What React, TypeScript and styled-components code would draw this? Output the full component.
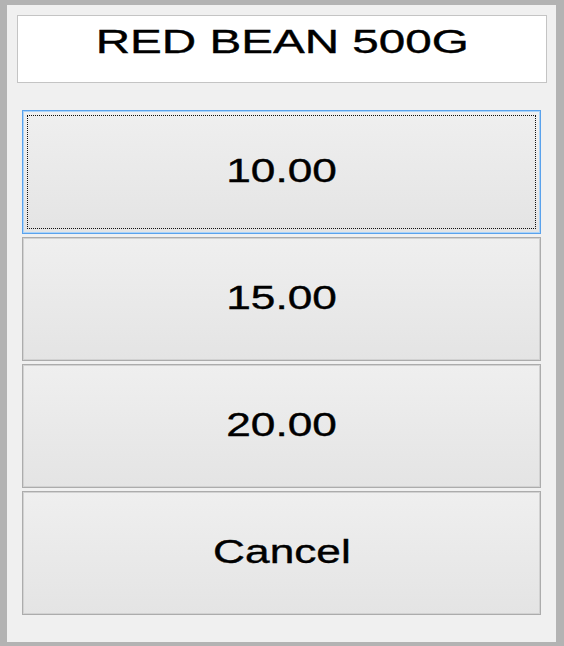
import { createGlobalStyle, styled } from 'styled-components';

const GlobalStyle = createGlobalStyle`
    html, body {
        margin: 0;
        background: #b3b3b3;
        font-family: "Liberation Sans", Arial, sans-serif;
    }
    * {
        box-sizing: border-box;
    }
`;

const Frame = styled.div`
    height: 646px;
    padding: 5px 8px 4px 7px;
`;

const Panel = styled.div`
    height: 100%;
    background: #f0f0f0;
    padding: 10px 9px 0 10px;
    display: flex;
    flex-direction: column;
`;

const TitleBox = styled.div`
    height: 68px;
    border: 1px solid #c4c4c4;
    background: #ffffff;
    padding-top: 5px;
    text-align: center;
    font-size: 34px;
    line-height: 40px;
    color: #000;
`;

const TitleText = styled.span`
    display: inline-block;
    transform: scaleX(1.4);
    white-space: nowrap;
    -webkit-text-stroke: 0.4px #000;
`;

const ButtonList = styled.div`
    display: flex;
    flex-direction: column;
    gap: 3px;
    margin-top: 27px;
    padding: 0 6px 0 5px;
`;

const PriceButton = styled.button<{ $focused?: boolean }>`
    height: 124px;
    width: 100%;
    padding: 0 0 4px 0;
    margin: 0;
    font-family: inherit;
    font-size: 34px;
    color: #000;
    cursor: pointer;
    background: linear-gradient(#efefef, #e4e4e4);
    border: 1px solid ${p => (p.$focused ? '#5aa2ec' : '#acacac')};
    box-shadow: inset 0 0 0 1px ${p => (p.$focused ? '#a9d3fa' : '#d2d2d2')};
    outline: ${p => (p.$focused ? '1px dotted #111' : 'none')};
    outline-offset: -6px;
    display: flex;
    align-items: center;
    justify-content: center;
`;

const Label = styled.span`
    display: inline-block;
    transform: scaleX(1.3);
    white-space: nowrap;
    -webkit-text-stroke: 0.4px #000;
`;

const prices = ['10.00', '15.00', '20.00'];

export default function App() {
    return (
        <>
            <GlobalStyle />
            <Frame>
                <Panel>
                    <TitleBox>
                        <TitleText>RED BEAN 500G</TitleText>
                    </TitleBox>
                    <ButtonList>
                        {prices.map((p, i) => (
                            <PriceButton key={p} $focused={i === 0}>
                                <Label>{p}</Label>
                            </PriceButton>
                        ))}
                        <PriceButton>
                            <Label>Cancel</Label>
                        </PriceButton>
                    </ButtonList>
                </Panel>
            </Frame>
        </>
    );
}
